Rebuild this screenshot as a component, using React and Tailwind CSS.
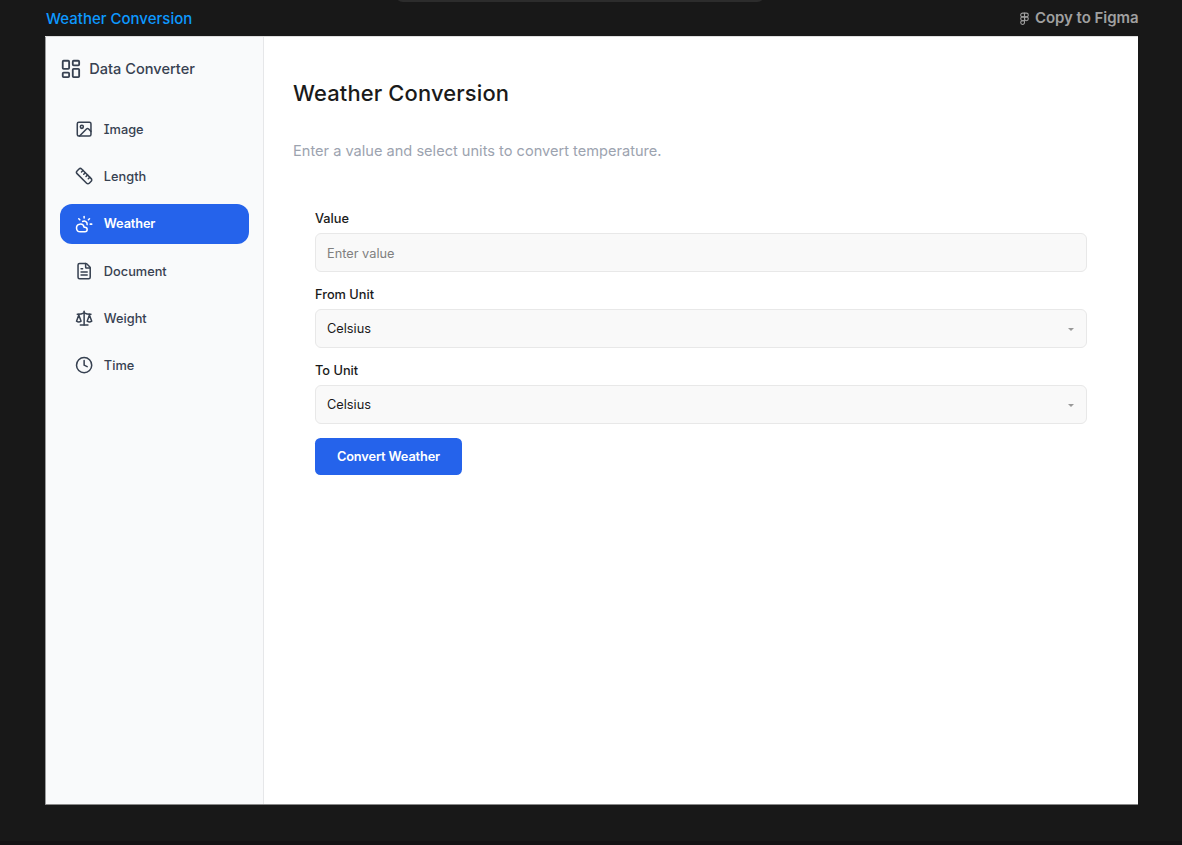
import { LayoutDashboard, Image, Ruler, CloudSun, FileText, Scale, Clock, Figma } from "lucide-react";

const items = [
  { label: "Image", Icon: Image },
  { label: "Length", Icon: Ruler },
  { label: "Weather", Icon: CloudSun, active: true },
  { label: "Document", Icon: FileText },
  { label: "Weight", Icon: Scale },
  { label: "Time", Icon: Clock },
];

function NavItem({ label, Icon, active }) {
  return (
    <a
      className={
        "flex h-[39.5px] items-center gap-[11px] rounded-xl pl-[14.6px] text-[12.78px] " +
        (active ? "bg-[#2563eb] font-semibold tracking-[-0.13px] text-white" : "font-medium text-[#374151]")
      }
    >
      <Icon size={18.25} strokeWidth={2} />
      <span className="[font-feature-settings:'cv08']">{label}</span>
    </a>
  );
}

function SelectField({ label }) {
  return (
    <div>
      <div className="mb-[5px] h-5 pt-px text-[12.78px] leading-5 font-medium text-[#1a1a1a]">{label}</div>
      <div className="flex h-[39px] items-center justify-between rounded-md border border-[#e8e8e8] bg-[#f9f9f9] pr-[12px] pl-[11px] text-[12.78px] text-[#1a1a1a]">
        <span>Celsius</span>
        <svg width="6" height="3" viewBox="0 0 6 3" className="mt-[2px]">
          <path d="M0 0h6L3 3z" fill="#999999" />
        </svg>
      </div>
    </div>
  );
}

export default function App() {
  return (
    <div className="relative flex h-[845px] w-[1182px] flex-col overflow-hidden border-b-4 border-[#141214] bg-[#181818] font-['Inter',sans-serif]">
      <div className="absolute -top-[14px] left-[395px] h-4 w-[370px] rounded-xl bg-[#2c2c2c]" />
      <div className="flex h-9 shrink-0 items-center justify-between pr-[43.5px] pl-[46px]">
        <div className="pt-[2px] text-[15px] font-medium text-[#0d99ff]">Weather Conversion</div>
        <div className="flex items-center gap-[3.5px] text-[15px] font-semibold tracking-[-0.05px] text-[#a0a0a0]">
          <Figma size={13} strokeWidth={2} />
          <span>Copy to Figma</span>
        </div>
      </div>
      <div className="ml-[45px] flex h-[769px] w-[1093px] shrink-0 border-t border-b border-t-[#dedede] border-b-[#898989] bg-white">
        <aside className="w-[219px] border-r border-l border-r-[#e6e7e9] border-l-[#9b9c9d] bg-[#f9fafb] px-[14px]">
          <div className="mt-[20px] flex h-6 items-center gap-[7.3px] text-[14.6px] font-medium text-[#374151]">
            <LayoutDashboard size={21.9} strokeWidth={2} />
            <span className="pt-px">Data Converter</span>
          </div>
          <nav className="mt-[28.6px] flex flex-col gap-[7.75px]">
            {items.map((item) => (
              <NavItem key={item.label} {...item} />
            ))}
          </nav>
        </aside>
        <main className="flex-1 pt-[40px] pr-[51px] pl-[29px]">
          <h1 className="h-8 text-[21.9px] leading-8 font-medium tracking-[0.15px] text-[#1a1a1a]">Weather Conversion</h1>
          <p className="mt-[30px] h-6 text-[14.6px] leading-6 text-[#9ca3af]">Enter a value and select units to convert temperature.</p>
          <form className="mt-[45px] flex flex-col gap-[12px] pl-[22px]">
            <div>
              <div className="mb-[5px] h-5 pt-px text-[12.78px] leading-5 font-medium text-[#1a1a1a]">Value</div>
              <input
                placeholder="Enter value"
                className="block h-[39px] w-full rounded-md border border-[#e8e8e8] bg-[#f9f9f9] px-[11px] pt-[2px] text-[12.78px] placeholder:text-[#808080]"
              />
            </div>
            <SelectField label="From Unit" />
            <SelectField label="To Unit" />
            <button type="button" className="mt-[2px] h-[37px] w-[147px] rounded-[5.5px] bg-[#2563eb] text-[12.78px] font-semibold tracking-[-0.12px] text-white">
              Convert Weather
            </button>
          </form>
        </main>
      </div>
    </div>
  );
}
